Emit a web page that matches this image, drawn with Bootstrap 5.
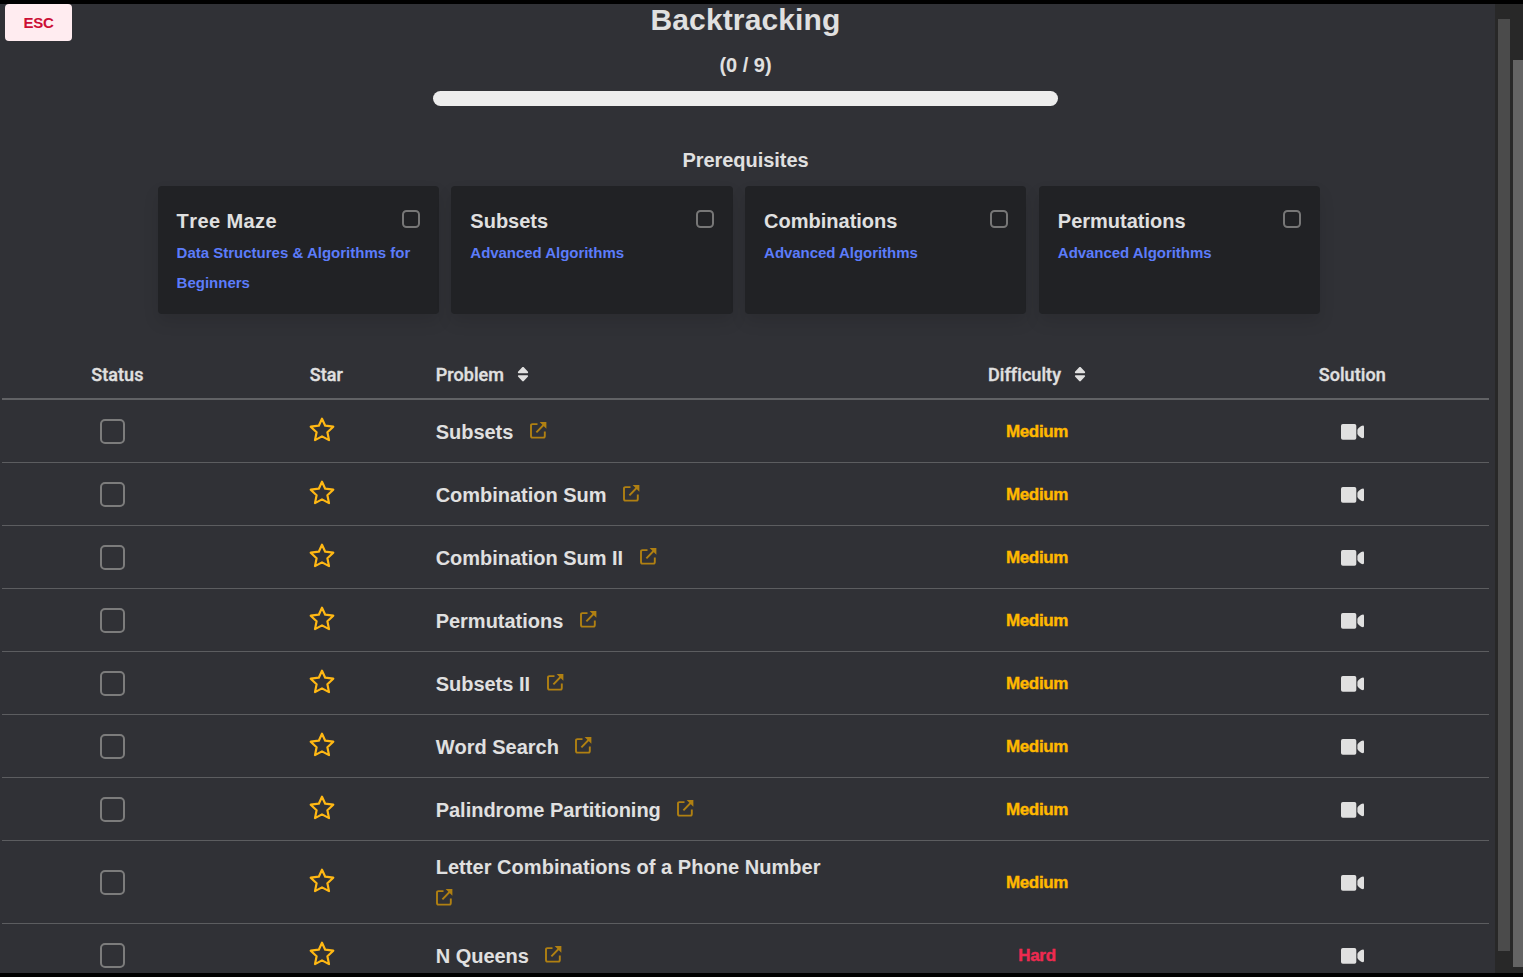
<!DOCTYPE html>
<html lang="en">
<head>
<meta charset="utf-8">
<meta name="viewport" content="width=device-width, initial-scale=1">
<title>Backtracking</title>
<link href="https://cdn.jsdelivr.net/npm/bootstrap@5.3.0/dist/css/bootstrap.min.css" rel="stylesheet">
<style>
body{font-family:"Liberation Sans",Arial,sans-serif;background:#000;color:#e0e0e0;font-weight:700;height:977px;overflow:hidden;padding:4px 0 4px}
.frame{height:969px;overflow:hidden}
.pane{background:#303136;overflow:hidden;height:969px}
.track{width:28px;background:#282828;gap:3px;padding-left:3px}
.thumb-in{width:12px;height:932px;margin-top:15px;background:#4b4b4b}
.thumb-out{width:10px;height:907px;margin-top:56px;background:#646464}
.esc{left:5px;top:4px;width:67px;height:37px;background:#ffecf0;color:#cc0f35;font-size:15px;font-weight:700;border:0;border-radius:4px;padding:0;line-height:37px;letter-spacing:-.2px}
.head-col{padding-right:4px}
h1{font-size:30px;font-weight:700;line-height:32px;margin:0;letter-spacing:.13px}
.count{font-size:20px;line-height:30px;margin-top:14px;letter-spacing:0}
.meter{width:625px;height:15px;border-radius:8px;background:#ededed;margin-top:11px}
h2{font-size:20px;font-weight:700;line-height:30px;margin:39px 0 11px;letter-spacing:-.04px}
.prereqs{display:grid;grid-template-columns:repeat(4,281.25px);gap:12.5px;margin-left:157.6px}
.prereq{background:#212225;height:128px;border:0;border-radius:4px;padding:20px 18.75px 20px 19px;box-shadow:0 8px 16px rgba(10,10,10,.1);color:inherit}
.prereq b{font-size:20px;line-height:30px;font-kerning:none}
.prereq:first-child b{letter-spacing:.4px}
.prereq a{font-size:15px;line-height:30px;color:#5c7cfa;text-decoration:none;margin-top:2px;letter-spacing:-.04px}
.prereq:first-child a{letter-spacing:0}
.box{display:inline-block;border:2px solid #7c7c7c;border-radius:5px;width:25px;height:25px;vertical-align:top}
.box.sm{width:18px;height:18px;border-color:#777;margin-top:4px;border-radius:4.5px}
.problems{width:1487px;margin:36px 0 0 2px;table-layout:fixed;border-collapse:separate;border-spacing:0}
.problems th{font:500 18px/24px Roboto,sans-serif;letter-spacing:.07px;-webkit-text-stroke:.35px currentColor;height:50px;border-bottom:2px solid #616265;padding:2px 0 0;vertical-align:middle}
.problems td{height:63px;border-bottom:1px solid #5c5d60;padding:1px 0 0;vertical-align:middle}
.problems tr.tall td{height:83px}
.problems th:nth-child(1),.problems th:nth-child(2){padding-left:9.8px}
.problems td:nth-child(3),.problems th:nth-child(3){padding-left:15.7px}
.problems th:nth-child(5){padding-right:8.5px}
.problems td:nth-child(5){padding-right:7px}
.problems td:nth-child(2){padding:0 0 3px 0}
.sorter{margin-left:13px;vertical-align:-2px}
.title{font-size:20px;line-height:30px;font-kerning:none;letter-spacing:-.02px}
.title span{margin-right:16.6px}
.title svg{vertical-align:0;margin-top:-4px}
.tall .title{margin-top:-1px;letter-spacing:.04px}
.tall .title svg{vertical-align:-2px}
.level{font-size:17px;letter-spacing:-.35px;color:#ffb800;-webkit-text-stroke:.4px currentColor;line-height:24px}
.level.hard{color:#ee2a50}
svg{display:inline-block}
</style>
</head>
<body>
<svg width="0" height="0" class="position-absolute" aria-hidden="true">
<symbol id="star" viewBox="0 0 26 25"><path d="M13 1.700 16.200 8.700 24.300 9.700 18.400 15.300 20 23.100 13 19.400 6 23.100 7.600 15.300 1.700 9.700 9.800 8.700Z" fill="none" stroke="#ffb814" stroke-width="2.200" stroke-linejoin="round"/></symbol>
<symbol id="ext" viewBox="0 0 17 17"><path d="M7.500 2.100H2.400Q1 2.100 1 3.500V14Q1 15.600 2.600 15.600H13.300Q14.800 15.600 14.800 14V9.600M6.400 10.300 14 2.500" fill="none" stroke="#b08012" stroke-width="1.900"/><path d="M9.600 0H16.400V6.800Z" fill="#b08012"/></symbol>
<symbol id="sort" viewBox="0 0 12 16"><path d="M5.200.2Q6-.4 6.800.2L11 4.800Q11.400 6.200 10.300 6.200H1.700Q.6 6.200 1 4.800ZM5.200 14.100Q6 14.800 6.800 14.100L11 9.500Q11.400 8.200 10.300 8.200H1.700Q.6 8.200 1 9.500Z" fill="#e0e0e0"/></symbol>
<symbol id="cam" viewBox="0 0 24 16"><rect x="0" y="0" width="15.300" height="15.700" rx="1.800" fill="#e0e0e0"/><path d="M16.400 6Q16.600 4.800 18.200 3.500L20.200 2Q21 1.600 22 1.600 23 1.700 23 2.700V13.100Q23 14.100 22 14.200 21 14.200 20.200 13.800L18.200 12.300Q16.600 11 16.400 9.800Z" fill="#e0e0e0"/></symbol>
</svg>
<div class="frame d-flex">
  <main class="pane flex-grow-1">
    <div class="head-col d-flex flex-column align-items-center">
      <h1>Backtracking</h1>
      <div class="count">(0 / 9)</div>
      <div class="meter"></div>
      <h2>Prerequisites</h2>
    </div>
    <section class="prereqs">
      <div class="card prereq"><div class="d-flex justify-content-between"><b>Tree Maze</b><i class="box sm"></i></div><a href="#">Data Structures &amp; Algorithms for Beginners</a></div>
      <div class="card prereq"><div class="d-flex justify-content-between"><b>Subsets</b><i class="box sm"></i></div><a href="#">Advanced Algorithms</a></div>
      <div class="card prereq"><div class="d-flex justify-content-between"><b>Combinations</b><i class="box sm"></i></div><a href="#">Advanced Algorithms</a></div>
      <div class="card prereq"><div class="d-flex justify-content-between"><b>Permutations</b><i class="box sm"></i></div><a href="#">Advanced Algorithms</a></div>
    </section>
    <table class="problems">
      <colgroup><col style="width:221px"><col style="width:197px"><col style="width:430px"><col style="width:374px"><col style="width:265px"></colgroup>
      <thead><tr><th class="text-center">Status</th><th class="text-center">Star</th><th>Problem<svg class="sorter" width="12" height="16"><use href="#sort"/></svg></th><th class="text-center">Difficulty<svg class="sorter" width="12" height="16"><use href="#sort"/></svg></th><th class="text-center">Solution</th></tr></thead>
      <tbody id="rows"></tbody>
    </table>
  </main>
  <aside class="track d-flex flex-shrink-0"><div class="thumb-in"></div><div class="thumb-out"></div></aside>
</div>
<button class="btn esc position-absolute">ESC</button>
<script src="https://cdn.jsdelivr.net/npm/bootstrap@5.3.0/dist/js/bootstrap.bundle.min.js"></script>
<script>
const problems=['Subsets','Combination Sum','Combination Sum II','Permutations','Subsets II','Word Search','Palindrome Partitioning','Letter Combinations of a Phone Number','N Queens'];
document.getElementById('rows').innerHTML=problems.map((name,i)=>{
  const tall=i===7,hard=i===8;
  return `<tr class="${tall?'tall':''}"><td class="text-center"><i class="box"></i></td>
  <td class="text-center"><svg width="26" height="25"><use href="#star"/></svg></td>
  <td><div class="title"><span>${name}</span>${tall?'<br>':''}<svg width="17" height="17"><use href="#ext"/></svg></div></td>
  <td class="text-center"><span class="level ${hard?'hard':''}">${hard?'Hard':'Medium'}</span></td>
  <td class="text-center"><svg width="24" height="16"><use href="#cam"/></svg></td></tr>`;
}).join('');
</script>
</body>
</html>
